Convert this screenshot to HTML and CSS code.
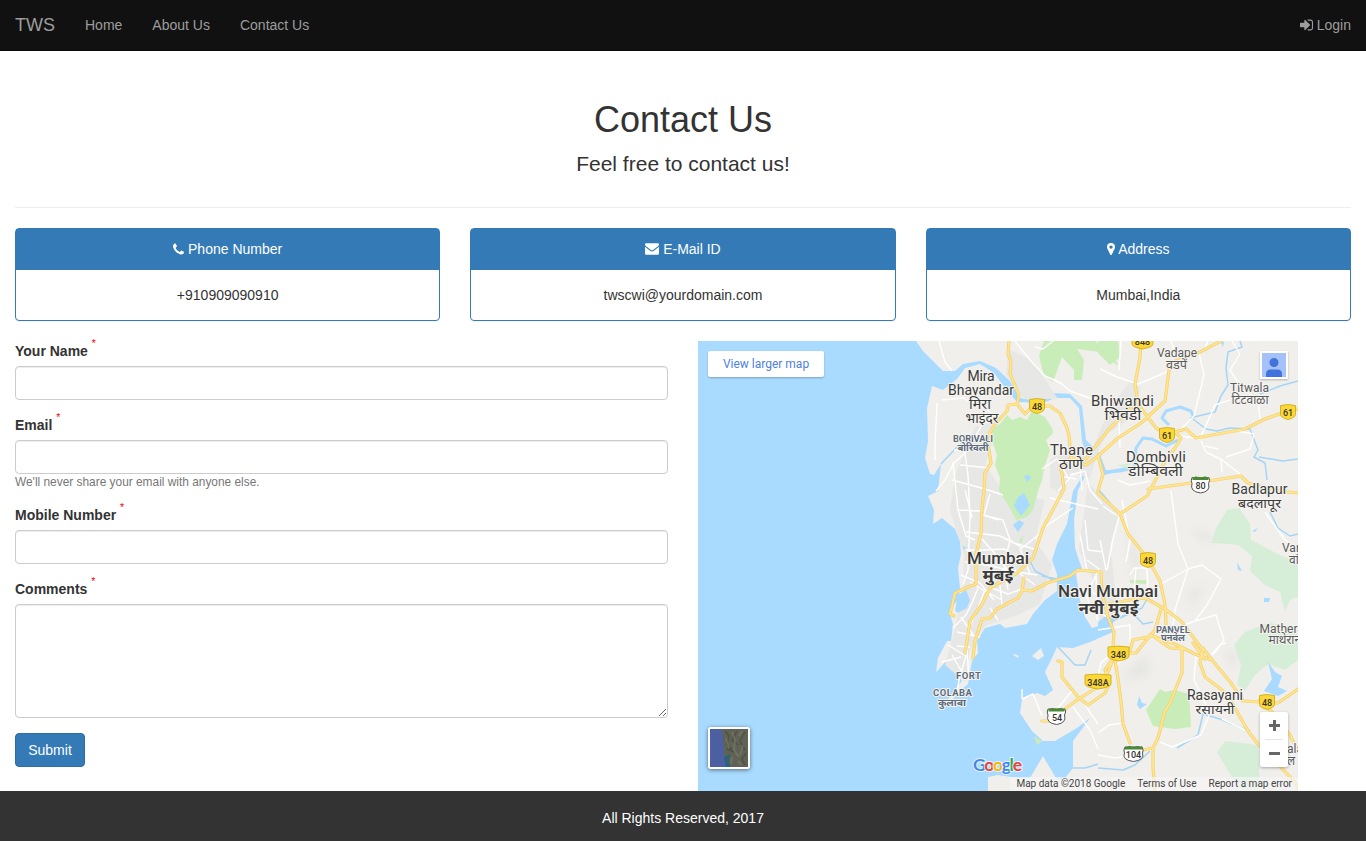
FILE: index.html
```html
<!DOCTYPE html>
<html lang="en">
<head>
<meta charset="utf-8">
<title>Contact Us</title>
<link rel="stylesheet" href="styles.css">
</head>
<body>
<nav class="navbar">
  <a class="brand">TWS</a>
  <a class="nav-link">Home</a>
  <a class="nav-link">About Us</a>
  <a class="nav-link">Contact Us</a>
  <a class="nav-link login"><svg class="icon" width="13" height="14" viewBox="0 0 1536 1536"><path d="M1184 768q0 26-19 45l-544 544q-19 19-45 19t-45-19-19-45v-288H64q-26 0-45-19T0 960V576q0-26 19-45t45-19h448V224q0-26 19-45t45-19 45 19l544 544q19 19 19 45zM1536 416v704q0 119-84.500 203.500T1248 1408H928q-13 0-22.500-9.500T896 1376q0-96 32-96h320q66 0 113-47t47-113V416q0-66-47-113t-113-47H928q-32 0-32-96 0-32 32-32h320q119 0 203.500 84.500T1536 416z"/></svg> Login</a>
</nav>

<header class="intro">
  <h1>Contact Us</h1>
  <p>Feel free to contact us!</p>
</header>
<hr class="rule">

<section class="cards">
  <div class="card">
    <div class="card-head"><svg class="icon" width="11" height="12" viewBox="0 0 1408 1408"><path d="M1408 1112q0 27-10 70.500t-21 68.500q-21 50-122 106-94 51-186 51-27 0-53-3.500t-57.500-12.500-47-14.500T856 1357t-49-18q-98-35-175-83-127-79-264-216T152 776q-48-77-83-175-3-9-18-49t-20.500-55.500-14.500-47T3.500 392 0 339q0-92 51-186C107 52 157 31 157 31q25-11 68.500-21T296 0q14 0 21 3 18 6 53 76 11 19 30 54t35 63.500 31 53.500q3 4 17.500 25t21.500 35.500 7 28.500q0 20-28.500 50t-62 55-62 53-28.500 46q0 9 5 22.500t8.500 20.500 14 24 11.500 19q76 137 174 235t235 174q2 1 19 11.500t24 14 20.500 8.500 22.500 5q18 0 46-28.500t53-62 55-62 50-28.500q14 0 28.500 7t35.500 21.500 25 17.500q25 15 53.500 31t63.500 35 54 30q70 35 76 53 3 7 3 21z"/></svg> Phone Number</div>
    <div class="card-body">+910909090910</div>
  </div>
  <div class="card">
    <div class="card-head"><svg class="icon" width="14" height="12" viewBox="0 0 15 12" preserveAspectRatio="none"><path d="M0 1.500Q0 .3 1.200.3h12.600Q15 .3 15 1.500q0 .9-1.200 1.800L9 6.800q-1.500 1-3 0L1.200 3.300Q0 2.400 0 1.500zM0 3.800l5.400 3.900q2.100 1.400 4.200 0L15 3.800v6.700q0 1.200-1.200 1.200H1.200Q0 11.700 0 10.500z"/></svg> E-Mail ID</div>
    <div class="card-body">twscwi@yourdomain.com</div>
  </div>
  <div class="card">
    <div class="card-head"><svg class="icon" width="8" height="12" viewBox="0 0 8 12"><path fill-rule="evenodd" d="M4 0a4 4 0 0 1 4 4q0 1-.4 1.700L4.800 11.500q-.3.500-.8.500t-.8-.5L.4 5.700Q0 5 0 4a4 4 0 0 1 4-4zm0 2.400a1.700 1.700 0 1 0 0 3.400 1.700 1.700 0 0 0 0-3.400z"/></svg> Address</div>
    <div class="card-body">Mumbai,India</div>
  </div>
</section>

<main class="main">
  <form class="form">
    <div class="field"><label for="name">Your Name <sup>*</sup></label><input id="name" class="control" type="text"></div>
    <div class="field"><label for="email">Email <sup>*</sup></label><input id="email" class="control" type="text"><small class="help">We'll never share your email with anyone else.</small></div>
    <div class="field"><label for="mobile">Mobile Number <sup>*</sup></label><input id="mobile" class="control" type="text"></div>
    <div class="field"><label for="comments">Comments <sup>*</sup></label><textarea id="comments" class="control comments"></textarea></div>
    <button class="submit" type="button">Submit</button>
  </form>

  <div class="map">
    <svg class="map-canvas" width="600" height="450" viewBox="698 341 600 450">
      <defs>
        <filter id="soft" x="-20%" y="-20%" width="140%" height="140%"><feGaussianBlur stdDeviation="5"/></filter>
        <path id="roads" d="M1009 341L1008 354 1011 361 1010 373 1016 388 1019 396 1017 404 1008 405 1007 411 995 424 987 438 991 463 985 473 984 491 982 508 981 534 976 554 976 584 968 587 955 593 952 606 950 614 954 616
        M1017 404L1025 414 1033 406 1050 406 1060 413 1067 428 1069 436 1071 458 1060 466 1062 474 1064 489 1043 528 1033 558 1017 573 990 588 982 604 970 621 967 641 965 653
        M1024 578L1022 591 1018 598 997 609 990 618 982 619 975 641 973 658
        M1023 590L1032 591 1047 583 1070 576 1078 570 1101 572 1102 593 1108 617 1114 632 1113 647 1112 660 1105 670 1110 682 1105 693 1088 705 1078 697 1062 677 1062 662 1058 661
        M1115 660L1118 679 1121 701 1123 724 1130 743
        M1042 721L1057 721 1066 708 1080 698 1103 684 1112 662
        M1130 653L1136 653 1148 638 1155 630 M1130 650L1133 640 1153 636 1170 648 1185 649 M1150 635L1177 645 1197 655 1212 660 1231 683 1243 701 1261 702 1278 703 1298 689
        M1098 493L1120 514 1128 534 1148 559 1160 581 1165 604 1166 624 M1155 630L1161 609 M1108 604L1130 600 1145 598 1165 609 1181 621 1196 641 1203 650 1200 663 1205 677 1222 690 1231 701 1248 731 1258 744 1294 781 1298 788
        M1182 649L1182 673 1170 703 1165 711 1158 738 1153 748 1143 750 1133 753 M1153 748L1153 768 1155 791
        M1193 643L1205 659 M1203 648L1212 660
        M1141 341L1140 358 1135 384 1138 404 1156 428 1167 434 1186 429 1196 438 1245 429 1265 419 1285 412 1298 409
        M1221 341L1198 353 1170 363 1165 401 1141 423 1118 438 1098 456 1103 474 1098 491
        M1133 406L1110 428 1098 443 1085 460 1071 458 M1098 456L1086 465 1071 459
        M1176 433L1181 438 1175 448 1165 461 1155 481 1147 496 1120 514 M1148 489L1191 483 1215 480 1241 476 1248 483 1278 491 1298 493
        M1260 700L1275 715 1290 735 1298 751"/>
      </defs>
      <rect x="698" y="341" width="600" height="450" fill="#a9daff"/>

      <g class="land">
        <path d="M916 341L923 351 935 363 943 371 955 371 963 364 980 361 996 368 1010 381 1020 398 1030 400 1043 399 1055 393 1070 394 1082 406 1086 440 1098 452 1104 471 1134 466 1160 500 1298 500V341Z"/>
        <path d="M932 386L943 390 957 379 965 368 980 364 994 373 1006 389 1017 402 1043 403 1055 398 1070 398 1079 408 1082 441 1086 453 1080 480 1073 491 1067 524 1057 544 1052 560 1057 574 1057 591 1045 600 1033 614 1027 624 1005 628 1000 624 985 628 977 641 978 653 972 661 968 684 961 690 953 699 946 703 953 692 962 681 955 667 946 661 940 668 936 672 938 658 947 641 951 641 953 624 950 614 953 606 958 600 960 588 958 568 961 554 960 541 955 529 942 518 933 524 934 510 928 496 938 491 941 464 934 475 930 474 925 458 928 441 927 408Z"/>
        <path d="M1086 453L1098 458 1104 475 1134 468 1160 460 1298 450V791L1120 791 1055 791 1073 768 1073 741 1090 718 1077 728 1055 741 1043 741 1032 731 1020 713 1022 699 1037 693 1045 696 1053 690 1045 672 1052 658 1057 647 1073 648 1090 642 1113 632 1110 623 1092 628 1085 617 1080 601 1076 573 1082 569 1075 548 1074 520 1078 490 1084 478Z"/>
        <path d="M988 791L988 777 998 775 1018 778 1030 778 1043 756 1056 778 1070 783 1090 779 1110 791ZM1014 654l5 2-1 2-5-3ZM1032 656l9-8 3 8-6 4Z"/>
      </g>

      <g class="urban">
        <path d="M975 427L1000 421 985 465 1003 491 1045 500 1035 540 1052 565 1040 604 1018 615 985 626 970 650 965 682 945 665 955 628 963 590 964 555 950 510 955 475Z"/>
        <path d="M1050 460L1072 445 1090 454 1110 407 1131 380 1140 388 1135 416 1108 433 1098 451 1090 479 1071 472 1063 495 1050 487ZM1088 482l20 23 11 12-9 28 8 67-18 10-8-44-13-28ZM1008 349l25 12 25 38-34 0-18-24Z"/>
      </g>
      <g fill="#e4e4e1" filter="url(#soft)"><path d="M1125 520l15 40-5 25zM1190 590l15-4-15 24zM1120 680l26-25 3 20zM1223 650l15 4-5 15zM1190 528l25 8-10 8z"/></g>

      <path class="park" d="M1007 415L1012 420 1020 417 1027 420 1032 411 1045 417 1052 428 1053 433 1046 440 1050 450 1045 465 1042 480 1038 491 1033 510 1027 517 1016 520 1010 508 999 491 1000 478 995 465 997 455 993 444 992 430 1000 424ZM1044 341L1095 341 1115 358 1118 366 1100 352 1077 349 1084 360 1082 380 1074 380 1074 370 1062 357 1053 382 1044 376 1039 356ZM1160 689L1165 692 1174 690 1189 694 1191 727 1175 729 1153 726 1146 710ZM1098 341h20l2 16-10 8-12-12ZM1034 736l8 5-5 4zM1130 580l16 0 0 4-16-1ZM1019 540l5-4-3 8z"/>
      <path class="hills" d="M1211 543L1216 528 1227 510 1239 508 1250 524 1251 540 1280 555 1298 562V597L1290 600 1285 612 1280 592 1265 585 1250 571 1252 556 1238 545 1215 543ZM1234 645L1245 632 1270 622 1298 633V660L1285 670 1268 664 1255 675 1245 690 1237 685 1241 665ZM1217 752L1225 741 1258 745 1260 790H1242L1230 774ZM1117 465l16-2-8 5z"/>
      <path class="lake" d="M1014 506L1018 497 1024 493 1030 505 1021 516ZM1013 525l6-5 5 3-6 9ZM1024 476l5-1 2 3-4 4ZM1264 691L1272 679 1268 662 1275 672 1282 676 1278 687 1287 691 1278 696ZM955 610L958 595 966 590 970 600 967 608 957 613ZM1137 705l2-9 3 7 5 1-7 5ZM1237 562l5 9-4-1ZM1264 598l6 0-1 4-5 0ZM1220 341l4 1-1 5zM1252 531l6-3-3 4zM1098 622l9-7 8 4-4 9-13 3zM963 546l4 2-4 1zM1128 407l5-1 0 3-5 0z"/>

      <path class="river" d="M1099 456L1105 472 1120 471 1134 468 1136 448 1143 438 1152 439 1166 446 1178 440M1169 425L1162 418 1166 411 1180 407 1191 411 1193 416"/>
      <g class="stream">
        <path d="M941 464L957 447 966 440M1053 580L1035 571 1029 559M1057 579L1042 576M1190 418L1215 412 1221 396 1228 385 1226 368 1228 352 1242 347 1240 341M1193 419L1206 429 1217 431 1230 428 1250 429 1258 450 1254 457 1265 463 1267 480M1259 457L1283 461 1298 459M1270 512L1278 528 1290 536 1298 534M1298 381L1280 386 1260 394"/>
        <path d="M1177 748L1198 735 1203 714 1220 719 1239 727 1250 731M1098 768L1123 770 1135 765 1150 751M1108 623L1132 612 1143 624 1153 622M1058 647L1075 665 1085 665 1091 650M1120 618L1142 608 1148 597M1073 768L1085 768 1098 764M1099 490L1110 503"/>
      </g>

      <g class="minor">
        <path d="M939 341L945 362 952 371M936 491L945 480 954 463 966 452 975 437 986 418M937 403L935 445 935 460M942 400L963 398 985 408 1000 420M953 462L958 510 966 536 975 540M963 440L968 475 970 515 968 570 963 585M952 480L985 489M960 465L990 468M954 450L981 450M965 490L972 518M958 510L981 511M982 515L1003 520 1010 540 1022 548 1041 533M966 532L1000 536 1014 543 1034 549M981 538L997 556 1014 579M966 550L985 550 1005 549M965 562L992 566 1011 571 1037 575M1010 540L1004 565 1008 590M961 575L980 583 994 600M978 588L972 603 966 615 953 628M992 588L1008 594 1022 589M985 589L978 609 968 630M970 582L985 591 1002 600M1000 585L1002 605M1015 570L1035 585M1020 548L1030 574M990 608L998 620M961 617L974 636M957 632L980 637M957 646L970 647M948 645L966 656 960 676 957 691M952 655L966 679M942 662L961 657M967 650L969 680M1005 549L1015 560M990 494L984 515 998 520M985 489L1003 495"/>
        <path d="M1053 341L1043 349 1035 347M1015 341L1030 360 1045 376 1061 383 1070 391 1095 400M1100 369L1117 377 1138 384 1160 375 1175 367M1199 353L1204 375 1194 416 1181 429M1181 436L1200 439 1215 405 1230 400M1201 441L1206 452 1222 460 1240 474M1205 446L1218 449M1237 431L1254 434 1250 449 1226 457M1221 460L1222 472M1232 341L1240 354 1230 370 1243 390 1258 399 1260 419M1171 341L1176 355M1119 420L1120 448M1042 469L1057 459 1069 479 1058 491M1070 475L1085 471 1090 490 1102 504M1076 479L1060 476M1080 466L1082 490M1120 513L1113 539 1107 570M1100 540L1106 570M1103 506L1116 515M1121 341L1119 370M1050 498L1098 509M1043 528L1073 508M1085 520L1088 550 1103 552M1087 560L1099 569 1089 590 1100 597M1085 590L1090 607 1107 617M1096 574L1097 620M1080 535L1087 570M1118 480L1130 485 1150 481"/>
        <path d="M1171 491L1178 544 1188 569 1202 565 1221 579 1207 605 1195 621 1170 630M1188 569L1175 610 1172 630M1188 569L1161 584M1195 621L1216 615 1224 640 1213 655M1196 655L1194 680 1210 713 1201 735 1172 747 1160 742M1130 575L1134 568 1148 568M1136 568L1134 590M1147 568L1148 590 1131 589M1098 733L1109 725 1122 723M1098 755L1115 758 1133 755M1150 751L1155 746M1098 630L1130 625 1130 642M1117 665L1127 653 1133 641M1115 650L1101 663 1097 681M1265 512L1285 540 1298 550M1211 655L1220 645 1226 643M1222 719L1245 730M1022 699L1022 689M1022 699L1033 694 1042 716M1058 708L1072 691M1073 707L1090 730 1098 749M1085 705L1098 724M1122 500L1130 540 1126 562M1155 791L1180 781M1208 341L1204 350M1253 492L1274 490"/>
      </g>
      <use href="#roads" class="road-edge"/>
      <use href="#roads" class="road-fill"/>

      <g class="shield">
        <path id="s48" d="M1029.500 399.500q7.500-1.800 15 0v9q0 3-7.500 5-7.500-2-7.500-5z"/>
        <use href="#s48" x="130" y="29"/><use href="#s48" x="251" y="6"/><use href="#s48" x="111" y="154"/><use href="#s48" x="230" y="296"/>
        <path d="M1132 335h21v9q0 3-10.500 5-10.500-2-10.500-5zM1108 647q10-1.800 21 0v9q0 3-10.500 5-10.500-2-10.500-5zM1085 675q12-1.800 26 0v9q0 3-13 5-13-2-13-5z"/>
      </g>
      <g class="us-shield">
        <path id="u" d="M1192 477.500q2 1 3.500-.5 5 1.500 10 0 2 1.500 3.500.5 1.500 3-.5 6 2.500 8-8 9.500-11-1.500-8.500-9.500-1.500-3 0-6z"/>
        <use href="#u" x="-144" y="231.500"/><path d="M1125 747q2 1 3.500-.5 5 1.500 10 0 2 1.500 3.500.5 2 3 .5 6 2.500 7-9 8.500-12-1.500-9-8.500-1.500-3 .5-6z"/>
        <path class="cap" d="M1192.500 477h16v3h-16zM1048.500 708.500h16v3h-16zM1125 746.500h17.500v3h-17.500z"/>
      </g>
      <g class="route">
        <text x="1037" y="409.500">48</text><text x="1167" y="438.500">61</text><text x="1288" y="415.500">61</text><text x="1148" y="563.500">48</text><text x="1267" y="705.500">48</text><text x="1142.500" y="345">848</text><text x="1118.500" y="657.500">348</text><text x="1098" y="685.500">348A</text><text x="1200.500" y="489">80</text><text x="1057" y="720.500">54</text><text x="1133.500" y="758">104</text>
      </g>

      <g class="city">
        <text x="998" y="564" font-size="17" font-weight="500" textLength="62">Mumbai</text><text x="998" y="580.500" font-size="16" font-weight="700" textLength="31" lengthAdjust="spacingAndGlyphs">मुंबई</text>
        <text x="1108" y="597" font-size="17" font-weight="500" textLength="100">Navi Mumbai</text><text x="1108.500" y="613.500" font-size="16" font-weight="700" textLength="60" lengthAdjust="spacingAndGlyphs">नवी मुंबई</text>
        <text x="981" y="381" font-size="14" textLength="27">Mira</text><text x="981" y="395" font-size="14" textLength="66">Bhayandar</text><text x="980" y="409" font-size="14" textLength="22" lengthAdjust="spacingAndGlyphs">मिरा</text><text x="982" y="422.500" font-size="14" textLength="33" lengthAdjust="spacingAndGlyphs">भाइंदर</text>
        <text x="1071.500" y="454.500" font-size="15" textLength="43">Thane</text><text x="1071" y="468.500" font-size="14" textLength="24" lengthAdjust="spacingAndGlyphs">ठाणे</text>
        <text x="1122.500" y="405.500" font-size="15" textLength="63">Bhiwandi</text><text x="1123" y="420" font-size="14" textLength="37" lengthAdjust="spacingAndGlyphs">भिवंडी</text>
        <text x="1156" y="461.500" font-size="15" textLength="60">Dombivli</text><text x="1155.500" y="475.500" font-size="14" textLength="55" lengthAdjust="spacingAndGlyphs">डोम्बिवली</text>
        <text x="1259.500" y="494" font-size="14" textLength="56">Badlapur</text><text x="1259.500" y="507.500" font-size="13" textLength="43" lengthAdjust="spacingAndGlyphs">बदलापूर</text>
        <text x="1215" y="700" font-size="14" textLength="56">Rasayani</text><text x="1215" y="713.500" font-size="13" textLength="39" lengthAdjust="spacingAndGlyphs">रसायनी</text>
      </g>
      <g class="town">
        <text x="1177" y="357" textLength="40">Vadape</text><text x="1176.500" y="368.500" textLength="21" lengthAdjust="spacingAndGlyphs">वडपें</text>
        <text x="1249.500" y="392" textLength="39">Titwala</text><text x="1250" y="403.500" textLength="37" lengthAdjust="spacingAndGlyphs">टिटवाळा</text>
        <text class="from" x="1282" y="551.500">Vangani</text><text class="from" x="1289" y="563.500">वांगणी</text>
        <text class="from" x="1259.500" y="632.500">Matheran</text><text class="from" x="1268.500" y="643.500">माथेरान</text>
        <text class="from" x="1287" y="753">ala</text><text class="from" x="1287" y="765">ल</text>
      </g>
      <g class="district">
        <text x="973" y="441.500" textLength="40">BORIVALI</text><text x="973" y="450.500" textLength="31" lengthAdjust="spacingAndGlyphs">बोरिवली</text>
        <text x="968.500" y="678.500" textLength="25">FORT</text><text x="952.500" y="695.500" textLength="39">COLABA</text><text x="952" y="705.500" textLength="28" lengthAdjust="spacingAndGlyphs">कुलाबा</text>
        <text x="1173" y="632.500" textLength="34">PANVEL</text><text x="1173" y="640.500" textLength="24" lengthAdjust="spacingAndGlyphs">पनवेल</text>
      </g>
      <text class="google" x="973" y="771" textLength="49"><tspan fill="#4285f4">G</tspan><tspan fill="#ea4335">o</tspan><tspan fill="#f5b800">o</tspan><tspan fill="#4285f4">g</tspan><tspan fill="#34a853">l</tspan><tspan fill="#ea4335">e</tspan></text>
    </svg>

    <a class="larger">View larger map</a>
    <div class="avatar"><svg width="24" height="24" viewBox="0 0 24 24"><path fill="#a4c2f9" d="M0 0h24v24H0z"/><circle cx="12" cy="9.500" r="4.500" fill="#4272db"/><path fill="#4272db" d="M4 24v-3q0-4.500 4.500-4.500h7Q20 16.500 20 21v3z"/></svg></div>
    <div class="satellite">
      <svg width="38" height="38" viewBox="0 0 38 38"><path fill="#5f6254" d="M0 0h38v38H0z"/><path fill="#4c5fa0" d="M0 0h12l1 10 1 10v10l3 8H0z"/><path fill="#27647b" d="M14 28l6-3-1 6 1 7h-4z"/>
        <g fill="none" stroke-width="1.500" stroke-opacity=".6"><path stroke="#3f4b3b" d="M15 2l4 5-2 8 5 6M27 2l-5 9 6 5M35 3l-5 9 5 9M17 20l7 3M36 24l-4 6 3 6"/><path stroke="#84806f" d="M22 3l3 8-1 10 5 7M32 2l-3 5M16 9l3 10M22 28l-1 7M33 16l-3 10M28 32l3 4"/></g>
      </svg>
    </div>
    <div class="zoom"><span class="zoom-btn plus"></span><span class="zoom-btn minus"></span></div>
    <div class="legal"><span>Map data ©2018 Google</span><span>Terms of Use</span><span>Report a map error</span></div>
  </div>
</main>

<footer class="footer">All Rights Reserved, 2017</footer>
</body>
</html>
```

FILE: styles.css
```css
* { box-sizing: border-box; }

body {
  margin: 0;
  background: #fff;
  color: #333;
  font: 14px/20px "Liberation Sans", Arial, sans-serif;
}

.icon { fill: currentColor; vertical-align: -1px; }

.navbar {
  display: flex;
  height: 51px;
  padding: 15px;
  gap: 30px;
  background: #111;
  border-bottom: 1px solid #080808;
  color: #9d9d9d;
}
.brand { font-size: 18px; }
.login { margin-left: auto; }
.login .icon { vertical-align: -2px; }

.intro {
  padding: 49px 15px 28px;
  text-align: center;
}
.intro h1 {
  margin: 0 0 9px;
  font-size: 36px;
  font-weight: 400;
  line-height: 40px;
}
.intro p {
  margin: 0;
  font-size: 21px;
  line-height: 30px;
}
.rule {
  height: 1px;
  margin: 0 15px 20px;
  border: 0;
  background: #eee;
}

.cards {
  display: grid;
  grid-template-columns: repeat(3, 1fr);
  gap: 30px;
  padding: 0 15px;
  text-align: center;
}
.card {
  border: 1px solid #337ab7;
  border-radius: 4px;
  box-shadow: 0 1px 1px rgba(0, 0, 0, .05);
}
.card-head {
  height: 41px;
  padding: 10px 15px;
  background: #337ab7;
  color: #fff;
}
.card-body { height: 50px; padding: 15px; }

.main {
  display: grid;
  grid-template-columns: 1fr 1fr;
  gap: 30px;
  padding: 20px 15px 0;
}
.form { height: 450px; }
.field { margin-bottom: 15px; }
label {
  display: block;
  height: 25px;
  font-weight: 700;
}
sup {
  position: relative;
  top: -9px;
  color: #f00;
  font-size: 10.500px;
  font-weight: 400;
  line-height: 0;
  vertical-align: baseline;
}
.control {
  display: block;
  width: 100%;
  height: 34px;
  padding: 6px 12px;
  border: 1px solid #ccc;
  border-radius: 4px;
  background: #fff;
  box-shadow: inset 0 1px 1px rgba(0, 0, 0, .075);
}
.comments { height: 114px; }
.help {
  display: block;
  height: 16px;
  color: #777;
  font-size: 11.900px;
  line-height: 16px;
}
.submit {
  display: block;
  height: 34px;
  width: 70px;
  padding: 0;
  border: 1px solid #2e6da4;
  border-radius: 4px;
  background: #337ab7;
  color: #fff;
  font: inherit;
}

.map {
  position: relative;
  width: 600px;
  height: 450px;
  overflow: hidden;
  font-family: Roboto, sans-serif;
}
.map-canvas { display: block; }
.land { fill: #f0efeb; }
.urban { fill: #e7e7e6; }
.park { fill: #c8edb8; }
.hills { fill: #d6eed8; }
.lake { fill: #a9daff; }
.river { fill: none; stroke: #a9daff; stroke-width: 3; stroke-linejoin: round; }
.stream { fill: none; stroke: #a4d5f7; stroke-width: 1.500; stroke-linejoin: round; }
.minor { fill: none; stroke: #fff; stroke-width: 1.400; stroke-linejoin: round; }
.road-edge, .road-fill { fill: none; stroke-linejoin: round; stroke-linecap: round; }
.road-edge { stroke: #f3cf70; stroke-width: 3.200; }
.road-fill { stroke: #ffe58d; stroke-width: 1.800; }
.shield { fill: #fdd835; stroke: #c9a616; stroke-width: .8; }
.us-shield { fill: #fff; stroke: #555; stroke-width: 1; }
.us-shield .cap { fill: #4b8a35; stroke: none; }
.route { fill: #333; font: 500 9px Roboto, sans-serif; text-anchor: middle; }
.city, .town, .district {
  font-family: Roboto, "Noto Sans Devanagari", "Noto Sans", sans-serif;
  text-anchor: middle;
  paint-order: stroke;
  stroke: #f5f4f1;
  stroke-width: 2px;
  stroke-linejoin: round;
}
.city { fill: #3b3b3b; }
.town { fill: #5a5a5a; font-size: 12px; }
.town .from { text-anchor: start; }
.district { fill: #5c6b7c; font-size: 9.500px; font-weight: 700; }
.google {
  font: 700 17.500px Lato, sans-serif;
  paint-order: stroke;
  stroke: #e6f3fc;
  stroke-width: 2px;
}

.larger, .avatar, .satellite, .zoom, .legal { position: absolute; }
.larger {
  left: 10px;
  top: 10px;
  width: 116px;
  height: 26px;
  border-radius: 2px;
  background: #fff;
  box-shadow: 0 1px 2px rgba(0, 0, 0, .25);
  color: #4f7fe0;
  font-size: 12px;
  line-height: 26px;
  text-align: center;
}
.avatar {
  top: 10px;
  right: 10px;
  padding: 2px;
  height: 28px;
  background: #fff;
  box-shadow: 0 1px 2px rgba(0, 0, 0, .25);
}
.satellite {
  left: 10px;
  bottom: 22px;
  width: 42px;
  height: 42px;
  border: 2px solid #fff;
  border-radius: 3px;
  box-shadow: 0 1px 4px rgba(0, 0, 0, .5);
}
.satellite svg { display: block; }
.zoom {
  right: 10px;
  bottom: 24px;
  width: 28px;
  height: 55px;
  border-radius: 2px;
  background: #fff;
  box-shadow: 0 1px 3px rgba(0, 0, 0, .3);
}
.zoom-btn {
  display: block;
  height: 27px;
  background: linear-gradient(#666, #666) center / 11px 3px no-repeat;
}
.plus {
  background: linear-gradient(#666, #666) center / 11px 3px no-repeat, linear-gradient(#666, #666) center / 3px 11px no-repeat;
}
.minus {
  height: 28px;
  margin: 0 5px;
  border-top: 1px solid #e6e6e6;
}
.legal {
  display: flex;
  right: 0;
  bottom: 0;
  height: 14px;
  padding: 0 6px;
  gap: 12px;
  background: rgba(245, 245, 245, .7);
  color: #444;
  font-size: 10px;
  line-height: 14px;
  white-space: nowrap;
}

.footer {
  height: 50px;
  padding: 17px 0;
  background: #333;
  color: #fff;
  text-align: center;
}
```
